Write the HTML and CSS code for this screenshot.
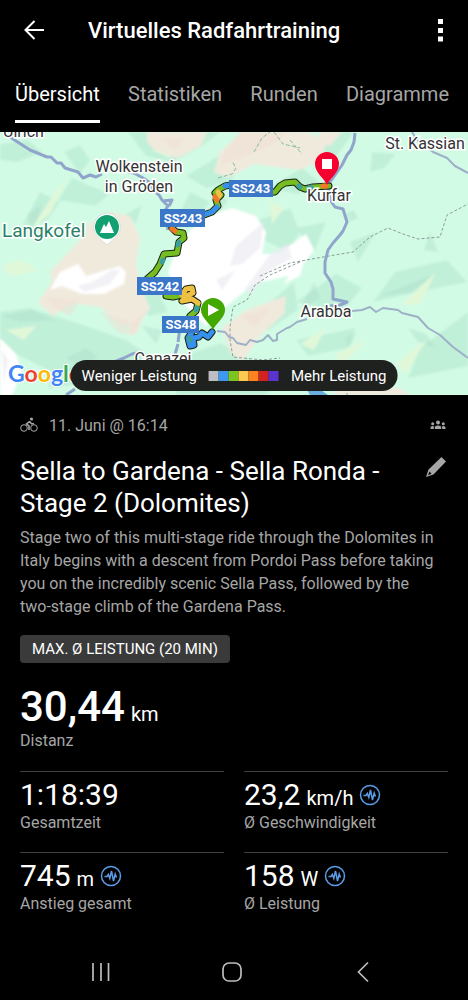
FILE: index.html
```html
<!DOCTYPE html>
<html lang="de">
<head>
  <meta charset="UTF-8">
  <meta name="viewport" content="width=device-width, initial-scale=1.0">
  <title>Virtuelles Radfahrtraining</title>
  <link rel="stylesheet" href="styles.css">
</head>
<body>
  <div class="app">
    <header class="topbar">
      <button class="icon-btn" aria-label="Zurück">
        <svg width="22" height="22" viewBox="0 0 22 22" fill="none" stroke="#fff" stroke-width="2"><path d="M11.5 2 2.5 11l9 9M2.5 11H21"/></svg>
      </button>
      <h1>Virtuelles Radfahrtraining</h1>
      <button class="icon-btn" aria-label="Mehr">
        <svg width="22" height="24" viewBox="0 0 22 24" fill="#fff"><path d="M8 1h5v5H8zM8 10h5v5H8zM8 18.500h5v5H8z"/></svg>
      </button>
    </header>

    <nav class="tabs">
      <a href="#uebersicht" class="active">Übersicht</a>
      <a href="#statistiken">Statistiken</a>
      <a href="#runden">Runden</a>
      <a href="#diagramme">Diagramme</a>
    </nav>

    <div class="map">
      <svg class="map-canvas" viewBox="0 0 468 263">
        <defs>
          <filter id="soft" x="-10%" y="-10%" width="120%" height="120%"><feGaussianBlur stdDeviation="1"/></filter>
        </defs>
        <rect width="468" height="263" fill="#d2fbe5"/>

        <!-- terrain -->
        <g filter="url(#soft)">
          <g fill="#c1f0d9">
            <path d="M0 12 28 8 42 20 18 30 0 28zM64 20l16-7 10 15-10 14zM72 46 110 62 95 74 58 68zM40 60l20 10-14 20-24 4z"/>
            <path d="M128 0h92l-18 14-30 16-26-6zM186 44l36-22 24 6-16 22-24 6zM268 56l34-20 20 16-24 10zM190 60l20 10-18 26-14-12z"/>
            <path d="M0 180l30-4 56 18 40 14 40 26-50-4-36 24-80-40zM52 226l36-14 30 14-20 24-50 6zM132 150l26 8 10 22-20 4z"/>
            <path d="M320 0h34l-22 30-16-8zM372 20l24 2-12 14-14 4zM240 96l50-20 10 24-12 20zM296 96l30-6-12 30zM296 170l40-28 26 14-20 24z"/>
            <path d="M395 140l52-12 20 22-40 8-54 12zM420 216l48-36v54l-60 12zM296 208l60-12-8 20-40 8zM350 110l26-10-18 30zM180 225l40-14 36 20 30 10-20 22h-90zM258 180l36-30 4 28-30 20z"/>
          </g>
          <g fill="#abdcc8" opacity="0.4">
            <path d="M28 82l14-10-6 22-6 4zM2 184l30-6 22 10-34 2zM66 226l20-10 12 10-20 8zM122 85l20-12-6 18zM300 178l14-28 6 16zM344 82l10-4 4 8-8 4z"/>
            <path d="M345 206l12-6-8 16zM380 164l60-24-30 20zM408 196l18 6 10 14-18-6zM250 20l16-10-8 22zM142 194l20 4-6 14zM430 100l8 20-14-2zM210 60l18 8-8 12z"/>
          </g>
          <g fill="#e1f8d8">
            <path d="M68 45 50 68 32 96l18-14zM2 134l18-6 18 10-26 6zM6 198l30-4-12 14zM300 212l26-16-12 22zM336 222l30-14-24 26zM396 232l30-24-20 34zM402 172l34-32-16 32zM152 18l30-14-12 22zM270 70l14 6-12 16z"/>
          </g>
          <g fill="#f0eadd">
            <path d="M147 0h60l-6 14-24 12-22-8-8-8zM214 40l6-20 22-20h66l18 10-4 18-22 10-46-6-26 14z"/>
            <path d="M38 170l14-20-2-10 30-32 8-16 22-12 20 4 10 22-4 26 6 26 8 18-8 12-20 5-22-18-28-4-20 13zM222 196l24-18 40-14-2 18-24 22-18 26-12-10zM130 170l14 6-6 24-8 4zM320 0l22 0-12 14-14-4zM340 256h60l10 7h-78z"/>
          </g>
          <g fill="#f0ddd3" opacity="0.5">
            <path d="M240 0h50l-20 14-50 20 4-14zM46 166l34 2-10 16-16-8zM100 180l32 10 14-10-12 22-14 0zM240 184l30-8-14 20zM160 6l24 0-8 12z"/>
          </g>
          <g fill="#fff">
            <path d="M184 106l18-20 30-10 24 8 10 16-4 22 16 0 28-20 8 16-18 24-42 10-30 24-18 18-26-26-12-28 6-16zM50 158l10-18 18-8 8 12 34-10 6 6-2 12-20 10-22 0-20-8zM0 206l16 16 6 18-10 23H0zM296 130l8 0-4 14-16 8z"/>
          </g>
          <g fill="#ecedf2" opacity="0.7">
            <path d="M236 114l16-14 12-10-4 26-18 16-12 2zM78 154l14-4 20-12 8 0-10 14-26 8zM272 120l16-8 4 14-22 12-18 24-8-4zM2 218l6 10-4 22zM216 148l20-10-14 20z"/>
          </g>
        </g>

        <!-- hiking trails and borders -->
        <g fill="none" stroke="#8e9c9a" stroke-width="1" stroke-dasharray="3 2">
          <path d="M260 144 290 131 323 125 353 120 370 105 388 96 403 102 418 107 440 105 447 83 468 72"/>
          <path d="M300 130 270 143 255 153 247 168 233 175 230 195 230 208 233 225 263 228 280 226"/>
          <path d="M347 256v7"/>
        </g>
        <g fill="none" stroke="#82bd9f" stroke-width="1" stroke-dasharray="4 2">
          <path d="M218 46 232 42 236 36 232 29M254 20 262 6 270 0M274 0 283 12 300 16M290 8 302 22"/>
        </g>

        <!-- roads -->
        <g class="roads">
          <path d="M8 3 13 7 30 18 47 25 51 25 57 31 61 31 65 36 78 40 83 46 90 43 96 45 102 42M128 40 134 41 143 46 149 50 153 58 159 63 162 68 168 74 164 80 168 98M162 69l10-1-3 6"/>
          <path d="M355 1 354 10 351 18 347 23 342 33 328 53 330 68 335 75 343 77 347 90 343 99 340 103 333 111 328 118 325 130 325 141 331 150 333 157 333 167 347 170 340 173 330 174"/>
          <path d="M178 210 180 196 182 190M174 226 178 212"/>
          <path d="M114 230 124 226 132 222 142 220M66 263 75 257"/>
        </g>
        <g class="roads minor">
          <path d="M412 0 417 8 433 20 447 26 455 34 468 41"/>
          <path d="M217 199 225 200 229 205 233 206 237 211 246 213 250 208 257 210 263 208 268 203 273 209 277 208 277 202 287 196 290 195 297 190 307 187"/>
          <path d="M352 179 362 178 370 175 376 180 383 176 398 178 402 181 418 185 428 196 440 203 453 215 468 226"/>
        </g>
        <path d="M306 256l12 0 10 7h-18z" fill="#6aaee0"/>

        <!-- ridden track -->
        <g class="track">
          <path class="track-edge" d="M329 54 313 55 305 57 300 55 295 50 285 51 280 54 275 60 264 61"/>
          <path class="track-edge" d="M231 53 225 54 218 58 215 61 221 63 216 68 218 74 212 80 204 83M172 96 176 100 183 101 184 106 179 110 177 121 164 122 160 132 155 140 147 147M166 164 173 165 182 163 186 157 192 156 193 161 186 164 182 169 192 167 198 171 196 179 190 184"/>
          <path class="track-edge" d="M192 200 188 206 190 214 194 213 193 206 199 205 202 201 208 205 212 200"/>
          <path class="track-line green" d="M329 54 313 55 305 57 300 55 295 50 285 51 280 54 275 60 264 61"/>
          <path class="track-line green" d="M231 53 225 54 218 58 215 61 221 63 216 68 218 74 212 80 204 83M172 96 176 100 183 101 184 106 179 110 177 121 164 122 160 132 155 140 147 147M166 164 173 165 182 163M198 171 196 179 190 184"/>
          <path class="track-line yellow" d="M218 60 220 63 217 66M182 163 186 157 192 156 193 161 186 164 182 169 192 167 198 171"/>
          <path class="track-line blue" d="M230 53 225 54M217 75 212 80 206 82M192 200 188 206 190 214 194 213 193 206 199 205 202 201 208 205 212 200"/>
          <path class="track-line orange" d="M326 54 323 54M215 65l2 3M172 97l3 2"/>
          <path class="track-line teal" d="M309 56l2-1M300 55l-1-1M179 110l-1 3M163 128l-1 2M197 176l-1 2M189 206l1 2"/>
        </g>

        <!-- road shields -->
        <g class="shield">
          <rect x="229" y="48" width="44" height="17"/><text x="251" y="61">SS243</text>
          <rect x="160" y="77" width="45" height="18"/><text x="183" y="91">SS243</text>
          <rect x="137" y="145" width="45" height="18"/><text x="160" y="159">SS242</text>
          <rect x="162" y="184" width="37" height="17"/><text x="181" y="197">SS48</text>
        </g>

        <!-- places -->
        <g class="place">
          <text x="12" y="5">St. Ulrich</text>
          <text x="139" y="40">Wolkenstein</text>
          <text x="139" y="60">in Gröden</text>
          <text x="329" y="69">Kurfar</text>
          <text x="425" y="17">St. Kassian</text>
          <text x="326" y="185">Arabba</text>
          <text x="163" y="232">Canazei</text>
        </g>
        <text class="peak" x="2" y="105">Langkofel</text>
        <path d="M107 81a14 14 0 0 0-8 25l8 7 8-7a14 14 0 0 0-8-25z" fill="#fff" stroke="#b9cfc5" stroke-width="0.500"/>
        <circle cx="107" cy="95" r="12" fill="#12a071"/>
        <path d="M100 101l4-9 2 3 3-6 5 12z" fill="#fff"/>

        <!-- start and finish pins -->
        <path d="M327 53c-2-6-12-12-12-21a12 12 0 0 1 24 0c0 9-10 15-12 21z" fill="#f5002f"/>
        <rect x="322" y="27" width="10" height="10" fill="#fff"/>
        <path d="M213 198c-2-6-12-12-12-20a12 12 0 0 1 24 0c0 8-10 14-12 20z" fill="#43a800"/>
        <path d="M208 172v12l11-6z" fill="#fff"/>

        <text class="google" x="8" y="250"><tspan fill="#4285f4">G</tspan><tspan fill="#ea4335">o</tspan><tspan fill="#fbbc05">o</tspan><tspan fill="#4285f4">g</tspan><tspan fill="#34a853">l</tspan><tspan fill="#ea4335">e</tspan></text>
      </svg>

      <div class="legend">
        <span>Weniger Leistung</span>
        <span class="scale">
          <i class="c1"></i><i class="c2"></i><i class="c3"></i><i class="c4"></i><i class="c5"></i><i class="c6"></i><i class="c7"></i>
        </span>
        <span>Mehr Leistung</span>
      </div>
    </div>

    <main class="content">
      <div class="meta">
        <svg width="18" height="16" viewBox="0 0 18 16" fill="none" stroke="#a6a6a6">
          <circle cx="4" cy="11" r="3.300"/><circle cx="14" cy="11" r="3.300"/>
          <circle cx="11.500" cy="2" r="1.600" fill="#a6a6a6" stroke="none"/>
          <path d="M9.500 4.500 6.500 7l2.500 2v4M9.500 4.500l2 2.200h2.500" stroke-width="1.600"/>
        </svg>
        <span class="date">11. Juni @ 16:14</span>
        <svg width="16" height="10" viewBox="0 0 16 10" fill="#a6a6a6">
          <circle cx="8" cy="2.500" r="2"/><circle cx="2.700" cy="3.700" r="1.500"/><circle cx="13.300" cy="3.700" r="1.500"/>
          <path d="M4.800 9V7.500Q4.800 5.500 8 5.500t3.200 2V9zM.5 9V7.500Q.5 6 2.700 6q1 0 1.500.4-.4.600-.4 1.300V9zM15.500 9V7.500Q15.500 6 13.300 6q-1 0-1.500.4.400.6.400 1.300V9z"/>
        </svg>
      </div>

      <div class="title-row">
        <h2>Sella to Gardena - Sella Ronda - Stage 2 (Dolomites)</h2>
        <button class="edit-btn" aria-label="Bearbeiten">
          <svg width="20" height="20" viewBox="0 0 20 20" fill="#a6a6a6"><path d="M15.500 0 20 4.500 7.500 17.500 0 20 2.500 12.500zM3.500 14.500 2 18.200l3.500-1.400z" fill-rule="evenodd"/></svg>
        </button>
      </div>

      <p class="description">Stage two of this multi-stage ride through the Dolomites in Italy begins with a descent from Pordoi Pass before taking you on the incredibly scenic Sella Pass, followed by the <span class="nowrap">two-stage</span> climb of the Gardena Pass.</p>

      <span class="badge">MAX. Ø LEISTUNG (20 MIN)</span>

      <div class="distance">
        <div class="value">30,44 <span class="unit">km</span></div>
        <div class="label">Distanz</div>
      </div>

      <div class="stats">
        <div class="stat">
          <div class="value">1:18:39</div>
          <div class="label">Gesamtzeit</div>
        </div>
        <div class="stat">
          <div class="value">23,2 <span class="unit">km/h</span>
            <svg class="pulse" viewBox="0 0 22 22"><circle cx="11" cy="11" r="9.500"/><path d="M4.500 11.500H7l1.300-2 1.500 4 1.700-7.500 2 10 1.700-7 1.300 3.500"/></svg>
          </div>
          <div class="label">Ø Geschwindigkeit</div>
        </div>
        <div class="stat">
          <div class="value">745 <span class="unit">m</span>
            <svg class="pulse" viewBox="0 0 22 22"><circle cx="11" cy="11" r="9.500"/><path d="M4.500 11.500H7l1.300-2 1.500 4 1.700-7.500 2 10 1.700-7 1.300 3.500"/></svg>
          </div>
          <div class="label">Anstieg gesamt</div>
        </div>
        <div class="stat">
          <div class="value">158 <span class="unit">W</span>
            <svg class="pulse" viewBox="0 0 22 22"><circle cx="11" cy="11" r="9.500"/><path d="M4.500 11.500H7l1.300-2 1.500 4 1.700-7.500 2 10 1.700-7 1.300 3.500"/></svg>
          </div>
          <div class="label">Ø Leistung</div>
        </div>
      </div>
    </main>

    <footer class="system-nav">
      <button aria-label="Letzte Apps">
        <svg width="22" height="22" viewBox="0 0 22 22"><path d="M3 2v18M11 2v18M18.500 2v18"/></svg>
      </button>
      <button aria-label="Startbildschirm">
        <svg width="22" height="22" viewBox="0 0 22 22"><rect x="2" y="2" width="18" height="18" rx="6"/></svg>
      </button>
      <button aria-label="Zurück">
        <svg width="22" height="22" viewBox="0 0 22 22"><path d="M16 1.500 6.500 11l9.500 9.500"/></svg>
      </button>
    </footer>
  </div>
</body>
</html>
```
FILE: styles.css
```css
* {
  margin: 0;
  padding: 0;
  box-sizing: border-box;
}

body {
  font-family: Roboto, sans-serif;
  background: #000;
  color: #fff;
}

button {
  background: none;
  border: none;
  cursor: pointer;
}

svg {
  display: block;
}

.app {
  display: flex;
  flex-direction: column;
  min-height: 100vh;
}

/* header */
.topbar {
  display: flex;
  align-items: center;
  height: 60px;
  padding: 0 16px 0 23px;
}

.topbar h1 {
  flex: 1;
  margin-left: 43px;
  padding-top: 2px;
  font-size: 22px;
  font-weight: 500;
  line-height: 30px;
}

.tabs {
  display: flex;
  justify-content: space-between;
  height: 72px;
  padding: 16px 19px 9px 15px;
}

.tabs a {
  padding-top: 6px;
  font-size: 20px;
  line-height: 24px;
  color: #a6a6a6;
  text-decoration: none;
  border-bottom: 3px solid transparent;
}

.tabs .active {
  color: #fff;
  border-color: #fff;
}

/* map */
.map {
  position: relative;
}

.map-canvas {
  width: 100%;
  height: auto;
}

.roads {
  fill: none;
  stroke: #8fa5cb;
  stroke-width: 3;
  stroke-linejoin: round;
}

.minor {
  stroke: #9db0c8;
  stroke-width: 2;
}

.track path {
  fill: none;
  stroke-linejoin: round;
  stroke-linecap: round;
}

.track .track-edge {
  stroke: #182010;
  stroke-width: 7;
}

.track .track-line {
  stroke-width: 5;
}

.green { stroke: #76bd22; }
.yellow { stroke: #eec043; }
.blue { stroke: #3690ee; }
.orange { stroke: #f07a2a; }
.teal { stroke: #3d9f9b; }

.shield rect {
  fill: #3b77c8;
}

.shield text {
  fill: #fff;
  font-size: 13px;
  font-weight: 700;
  text-anchor: middle;
}

.place text {
  fill: #333;
  stroke: #fff;
  stroke-width: 3px;
  paint-order: stroke;
  font-size: 16px;
  text-anchor: middle;
}

.peak {
  fill: #2a8067;
  stroke: #fff;
  stroke-width: 3px;
  paint-order: stroke;
  font-size: 19px;
}

.google {
  stroke: #fff;
  stroke-width: 2px;
  paint-order: stroke;
  font-family: Lato, sans-serif;
  font-size: 23px;
  font-weight: 700;
}

.legend {
  position: absolute;
  left: 50%;
  bottom: 4px;
  transform: translateX(-50%);
  display: flex;
  align-items: center;
  gap: 12px;
  height: 31px;
  padding: 0 11px;
  border-radius: 16px;
  background: #1f211f;
  font-size: 15px;
  white-space: nowrap;
}

.scale {
  display: flex;
}

.scale i {
  width: 10px;
  height: 10px;
}

.c1 { background: #bdbdc3; }
.c2 { background: #3e98f0; }
.c3 { background: #7ac51e; }
.c4 { background: #fcc850; }
.c5 { background: #fb8421; }
.c6 { background: #d6221f; }
.c7 { background: #5b33cf; }

/* activity details */
.content {
  padding: 20px 20px 0;
}

.meta {
  display: flex;
  align-items: center;
  height: 20px;
  padding-right: 2px;
}

.date {
  flex: 1;
  margin-left: 11px;
  font-size: 16px;
  color: #a6a6a6;
}

.title-row {
  display: flex;
  align-items: flex-start;
  justify-content: space-between;
  margin-top: 20px;
}

.title-row h2 {
  flex: 1;
  font-size: 26px;
  font-weight: 400;
  line-height: 32px;
}

.edit-btn {
  padding: 2px;
}

.description {
  margin-top: 7px;
  font-size: 16px;
  line-height: 23px;
  color: #a6a6a6;
}

.nowrap {
  white-space: nowrap;
}

.badge {
  display: inline-block;
  margin-top: 17px;
  padding: 0 12px;
  border-radius: 4px;
  background: #3a3a3a;
  font-size: 15px;
  line-height: 28px;
}

.value {
  display: flex;
  align-items: baseline;
  gap: 6px;
}

.label {
  font-size: 16px;
  line-height: 20px;
  color: #a6a6a6;
}

.distance {
  margin-top: 20px;
}

.distance .value {
  font-size: 42px;
  font-weight: 500;
  line-height: 48px;
}

.value .unit {
  font-size: 20px;
  font-weight: 400;
  line-height: 20px;
}

.stats {
  display: grid;
  grid-template-columns: 1fr 1fr;
  column-gap: 20px;
  margin-top: 20px;
}

.stat {
  height: 81px;
  padding-top: 5px;
  border-top: 1px solid #404040;
}

.stat .value {
  font-size: 30px;
  line-height: 36px;
}

.pulse {
  align-self: center;
  width: 22px;
  height: 22px;
  fill: none;
  stroke: #5b9ce6;
  stroke-width: 1.5;
}

/* android navigation */
.system-nav {
  display: flex;
  justify-content: space-around;
  margin-top: auto;
  padding: 17px 40px 17px 35px;
}

.system-nav svg {
  fill: none;
  stroke: #bdbdbd;
  stroke-width: 1.7;
}
```
